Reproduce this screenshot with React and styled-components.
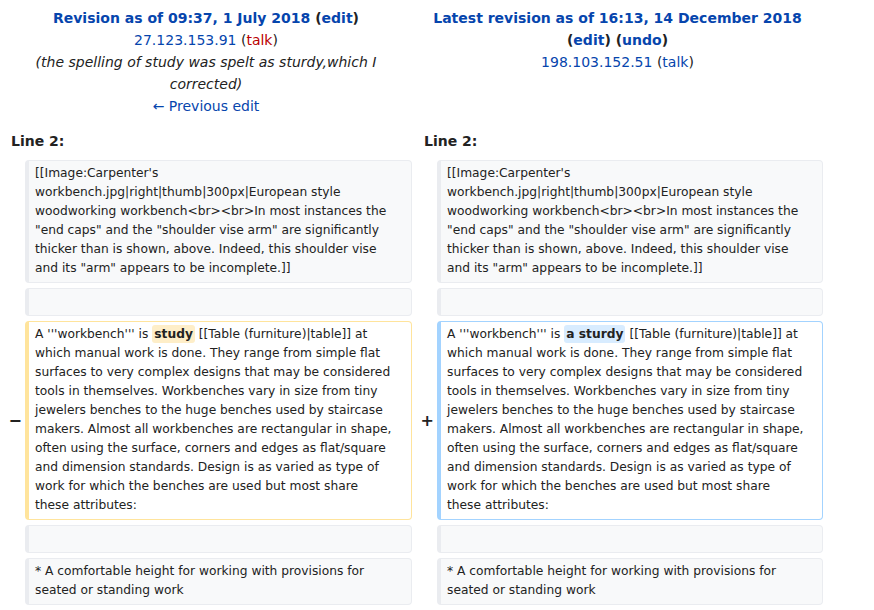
import React from 'react';
import styled, { createGlobalStyle, css } from 'styled-components';

const GlobalStyle = createGlobalStyle`
  html, body {
    margin: 0;
    padding: 0;
    background: #ffffff;
  }
  body {
    font-family: "DejaVu Sans", sans-serif;
    color: #222222;
  }
`;

const DiffGrid = styled.div`
  display: grid;
  grid-template-columns: 25px 387px 25px 386px;
  row-gap: 5px;
  padding-top: 7px;
`;

const HeaderCell = styled.div`
  grid-column: span 2;
  text-align: center;
  font-size: 14px;
  line-height: 22px;
  padding: 0 4px;
  margin-bottom: 8px;
`;

const Title = styled.div`
  font-weight: bold;
`;

const Comment = styled.div`
  font-style: italic;
  color: #222222;
`;

const Link = styled.a`
  color: ${({ $red }) => ($red ? '#ba0000' : '#0645ad')};
  text-decoration: none;
  cursor: pointer;
`;

const LineNo = styled.div`
  grid-column: span 2;
  font-weight: bold;
  font-size: 14px;
  line-height: 22px;
  padding-left: ${({ $indent }) => $indent}px;
  margin-bottom: 3px;
`;

const Marker = styled.div`
  align-self: center;
  text-align: right;
  padding-right: 3px;
  font-size: 16px;
  font-weight: bold;
  line-height: 19px;
`;

const variants = {
  context: css`
    background: #f8f9fa;
    border-color: #eaecf0;
  `,
  deleted: css`
    background: #ffffff;
    border-color: #ffe49c;
  `,
  added: css`
    background: #ffffff;
    border-color: #a3d3ff;
  `,
};

const ContentCell = styled.div`
  grid-column: ${({ $col }) => $col};
  border: 1px solid;
  border-left-width: 4px;
  border-radius: 4px;
  padding: 3px 16px 4px 6px;
  font-size: 12.25px;
  line-height: 19px;
  color: #222222;
  overflow-wrap: break-word;
  min-height: 19px;
  ${({ $variant }) => variants[$variant]}
`;

const Change = styled.span`
  font-weight: bold;
  border-radius: 3px;
  padding: 2px 2px;
  background: ${({ $variant }) => ($variant === 'added' ? '#d8ecff' : '#feeec8')};
`;

const imageText =
  '[[Image:Carpenter\'s workbench.jpg|right|thumb|300px|European style woodworking workbench<br><br>In most instances the "end caps" and the "shoulder vise arm" are significantly thicker than is shown, above. Indeed, this shoulder vise and its "arm" appears to be incomplete.]]';

const restText =
  ' [[Table (furniture)|table]] at which manual work is done. They range from simple flat surfaces to very complex designs that may be considered tools in themselves. Workbenches vary in size from tiny jewelers benches to the huge benches used by staircase makers. Almost all workbenches are rectangular in shape, often using the surface, corners and edges as flat/square and dimension standards. Design is as varied as type of work for which the benches are used but most share these attributes:';

const heightText = '* A comfortable height for working with provisions for seated or standing work';

const ContextRow = ({ children }) => (
  <>
    <ContentCell $col={2} $variant="context">{children}</ContentCell>
    <ContentCell $col={4} $variant="context">{children}</ContentCell>
  </>
);

const App = () => (
  <>
    <GlobalStyle />
    <DiffGrid>
      <HeaderCell>
        <Title>
          <Link>Revision as of 09:37, 1 July 2018</Link> (<Link>edit</Link>)
        </Title>
        <div>
          <Link>27.123.153.91</Link> (<Link $red>talk</Link>)
        </div>
        <Comment>(the spelling of study was spelt as sturdy,which I corrected)</Comment>
        <div>
          <Link>← Previous edit</Link>
        </div>
      </HeaderCell>
      <HeaderCell>
        <Title>
          <Link>Latest revision as of 16:13, 14 December 2018</Link> (<Link>edit</Link>) (
          <Link>undo</Link>)
        </Title>
        <div>
          <Link>198.103.152.51</Link> (<Link>talk</Link>)
        </div>
      </HeaderCell>

      <LineNo $indent={11}>Line 2:</LineNo>
      <LineNo $indent={12}>Line 2:</LineNo>

      <ContextRow>{imageText}</ContextRow>
      <ContextRow>{'\u00a0'}</ContextRow>

      <Marker>−</Marker>
      <ContentCell $col={2} $variant="deleted">
        A '''workbench''' is <Change $variant="deleted">study</Change>
        {restText}
      </ContentCell>
      <Marker>+</Marker>
      <ContentCell $col={4} $variant="added">
        A '''workbench''' is <Change $variant="added">a sturdy</Change>
        {restText}
      </ContentCell>

      <ContextRow>{'\u00a0'}</ContextRow>
      <ContextRow>{heightText}</ContextRow>
    </DiffGrid>
  </>
);

export default App;
